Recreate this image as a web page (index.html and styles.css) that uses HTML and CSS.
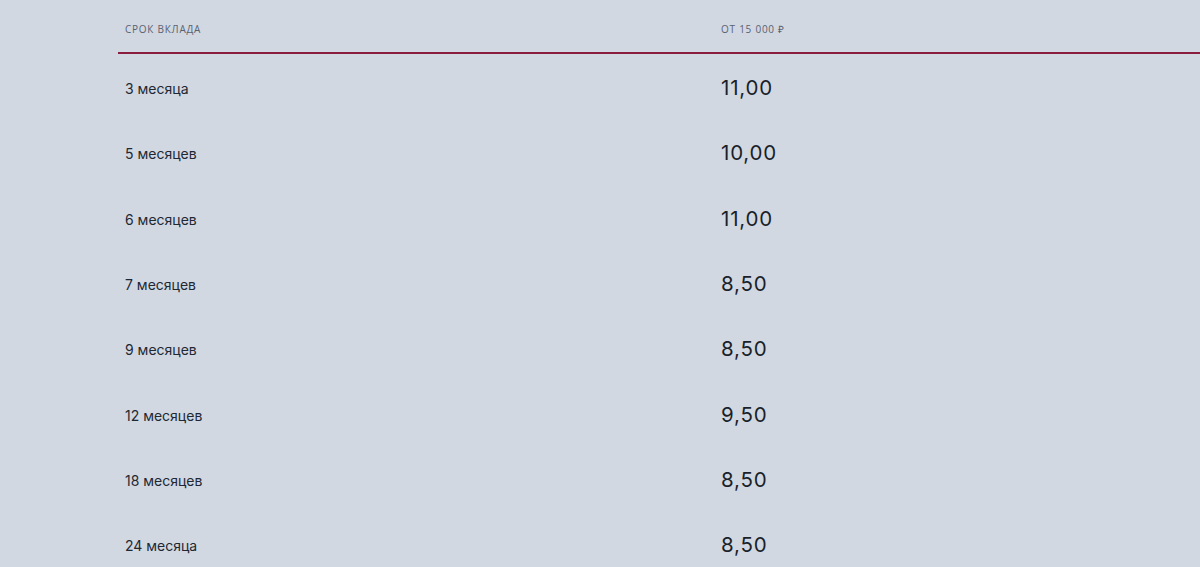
FILE: index.html
```html
<!DOCTYPE html>
<html lang="ru">
<head>
<meta charset="utf-8">
<link rel="stylesheet" href="styles.css">
</head>
<body>
<div class="wrap">
  <div class="head">
    <div class="c1 h">Срок вклада</div>
    <div class="c2 h">От 15 000 ₽</div>
  </div>
  <div class="row"><div class="c1">3 месяца</div><div class="c2 v">11,00</div></div>
  <div class="row"><div class="c1">5 месяцев</div><div class="c2 v">10,00</div></div>
  <div class="row"><div class="c1">6 месяцев</div><div class="c2 v">11,00</div></div>
  <div class="row"><div class="c1">7 месяцев</div><div class="c2 v">8,50</div></div>
  <div class="row"><div class="c1">9 месяцев</div><div class="c2 v">8,50</div></div>
  <div class="row"><div class="c1">12 месяцев</div><div class="c2 v">9,50</div></div>
  <div class="row"><div class="c1">18 месяцев</div><div class="c2 v">8,50</div></div>
  <div class="row"><div class="c1">24 месяца</div><div class="c2 v">8,50</div></div>
</div>
</body>
</html>
```
FILE: styles.css
```css
html, body {
  margin: 0;
  padding: 0;
  background: #d1d8e2;
  overflow: hidden;
}
body {
  font-family: "Open Sans", "Liberation Sans", sans-serif;
  color: #1f2530;
}
.wrap {
  margin-left: 118px;
  width: 1082px;
}
.head {
  display: flex;
  align-items: flex-start;
  height: 54px;
  padding-top: 23px;
  border-bottom: 2px solid #8a1c40;
  box-sizing: border-box;
}
.h {
  font-size: 10px;
  line-height: 12px;
  text-transform: uppercase;
  letter-spacing: 0.75px;
  color: #596271;
}
.c1 {
  width: 603px;
  padding-left: 7px;
  box-sizing: border-box;
  flex: none;
}
.c2 {
  flex: 1;
}
.row {
  display: flex;
  align-items: center;
  height: 65.33px;
  padding-top: 2px;
  box-sizing: border-box;
}
.row .c1 {
  font-family: "Inter", "Open Sans", sans-serif;
  font-size: 14px;
  color: #222833;
  padding-top: 2px;
}
.v {
  font-family: "Inter", sans-serif;
  font-size: 20.5px;
  letter-spacing: 0.8px;
  color: #1a1f29;
}
```
